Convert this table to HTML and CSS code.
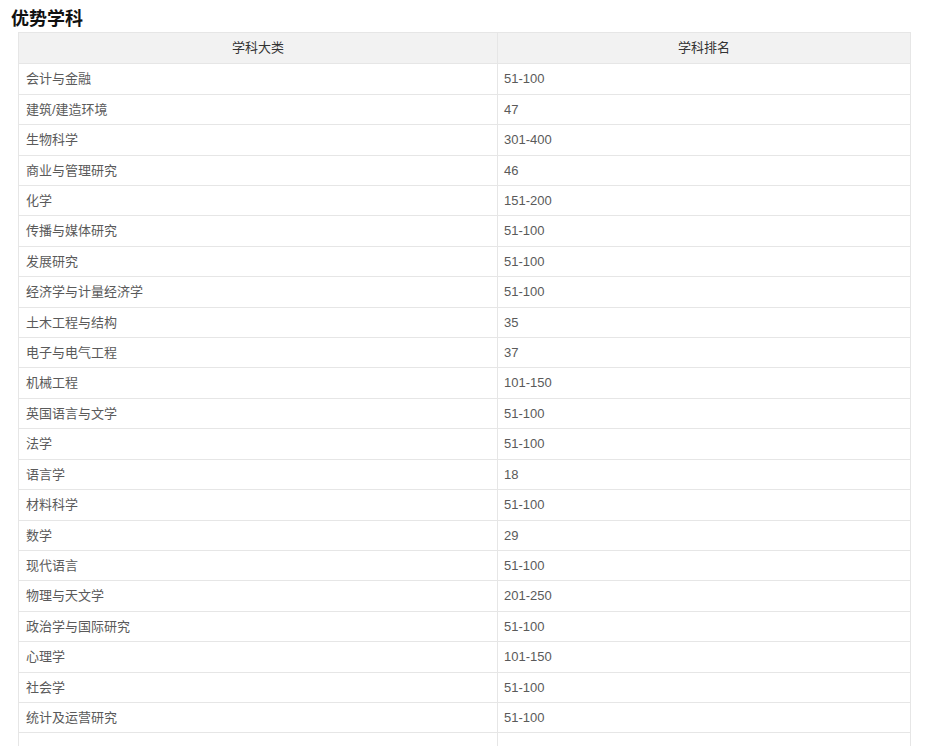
FILE: index.html
```html
<!DOCTYPE html>
<html lang="zh-CN">
<head>
<meta charset="utf-8">
<title>优势学科</title>
<link rel="stylesheet" href="styles.css">
</head>
<body>
<h3 class="title">优势学科</h3>
<table class="rank">
<thead>
<tr><th class="c1">学科大类</th><th class="c2">学科排名</th></tr>
</thead>
<tbody>
<tr><td>会计与金融</td><td>51-100</td></tr>
<tr><td>建筑/建造环境</td><td>47</td></tr>
<tr><td>生物科学</td><td>301-400</td></tr>
<tr><td>商业与管理研究</td><td>46</td></tr>
<tr><td>化学</td><td>151-200</td></tr>
<tr><td>传播与媒体研究</td><td>51-100</td></tr>
<tr><td>发展研究</td><td>51-100</td></tr>
<tr><td>经济学与计量经济学</td><td>51-100</td></tr>
<tr><td>土木工程与结构</td><td>35</td></tr>
<tr><td>电子与电气工程</td><td>37</td></tr>
<tr><td>机械工程</td><td>101-150</td></tr>
<tr><td>英国语言与文学</td><td>51-100</td></tr>
<tr><td>法学</td><td>51-100</td></tr>
<tr><td>语言学</td><td>18</td></tr>
<tr><td>材料科学</td><td>51-100</td></tr>
<tr><td>数学</td><td>29</td></tr>
<tr><td>现代语言</td><td>51-100</td></tr>
<tr><td>物理与天文学</td><td>201-250</td></tr>
<tr><td>政治学与国际研究</td><td>51-100</td></tr>
<tr><td>心理学</td><td>101-150</td></tr>
<tr><td>社会学</td><td>51-100</td></tr>
<tr><td>统计及运营研究</td><td>51-100</td></tr>
<tr><td>&nbsp;</td><td>&nbsp;</td></tr>
</tbody>
</table>
</body>
</html>
```
FILE: styles.css
```css
html, body {
  margin: 0;
  padding: 0;
  background: #ffffff;
}
body {
  font-family: "Liberation Sans", "Noto Sans CJK SC", Arial, sans-serif;
  color: #5a5a5a;
  font-size: 13px;
}
.title {
  margin: 0;
  padding: 6px 0 0 11px;
  height: 26px;
  line-height: 22px;
  font-size: 18px;
  font-weight: bold;
  color: #111111;
  font-family: "Noto Sans CJK SC", sans-serif;
}
.rank {
  margin-left: 18px;
  width: 893px;
  border-collapse: collapse;
  table-layout: fixed;
}
.rank th, .rank td {
  border: 1px solid #e6e6e6;
  padding: 7px 7px;
  line-height: 15.4px;
  text-align: left;
  font-weight: normal;
}
.rank th {
  background: #f2f2f2;
  text-align: center;
  color: #333333;
  padding: 7px 7px 8px;
}
.rank .c1 {
  width: 464px;
}
.rank td:first-child {
  padding-left: 7px;
}
.rank td:last-child {
  padding-left: 6px;
}
```
